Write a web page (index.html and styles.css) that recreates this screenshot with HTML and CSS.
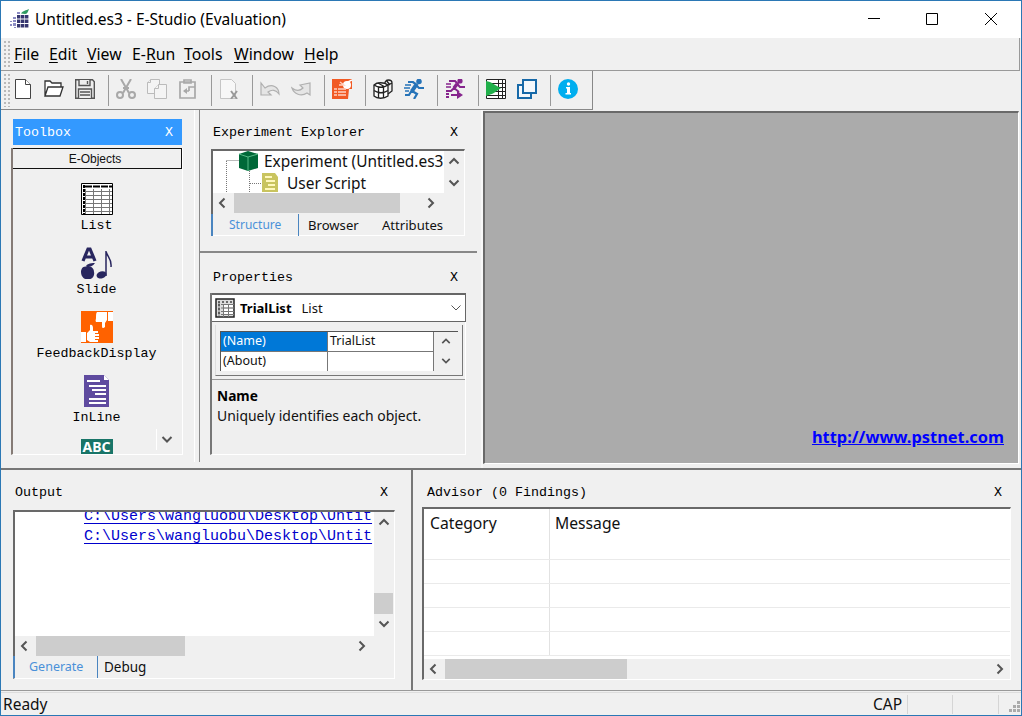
FILE: index.html
```html
<!DOCTYPE html>
<html lang="en">
<head>
<meta charset="utf-8">
<title>Untitled.es3 - E-Studio (Evaluation)</title>
<link rel="stylesheet" href="styles.css">
</head>
<body>
<svg class="defs" width="0" height="0">
  <symbol id="up" viewBox="0 0 12 12"><path d="M1.5 8.5 6 4l4.500 4.500"/></symbol>
  <symbol id="down" viewBox="0 0 12 12"><path d="M1.500 3.500 6 8l4.500-4.500"/></symbol>
  <symbol id="left" viewBox="0 0 12 12"><path d="M8.500 1.500 4 6l4.500 4.500"/></symbol>
  <symbol id="right" viewBox="0 0 12 12"><path d="M3.500 1.500 8 6l-4.500 4.500"/></symbol>
</svg>
<div class="window">
  <header class="titlebar">
    <svg class="app-icon" width="20" height="20" viewBox="0 0 20 20">
      <g fill="#36366f"><path d="M7 6h3.400v3.400H7zM11 6h3.400v3.400H11zM15 6h3.400v3.400H15zM7 10.500h3.400v3.400H7zM11 10.500h3.400v3.400H11zM15 10.500h3.400v3.400H15zM7 15h3.400v3.400H7zM11 15h3.400v3.400H11zM15 15h3.400v3.400H15z"/></g>
      <g fill="#8b8bc2"><path d="M3 8h3v2H3zM3 11h3v2H3zM3 14h3v3H3zM0 12h2v1H0zM0 15h2v2H0zM4 18h2v1H4zM7 3h3v2H7z"/></g>
      <path d="M11 4.500c2-3 5-3 8-4.500-1 3-2 5-4 5z" fill="#2f9a62"/>
    </svg>
    <span class="caption">Untitled.es3 - E-Studio (Evaluation)</span>
    <svg class="controls" width="136" height="20" viewBox="0 0 136 20" fill="none" stroke="#000" stroke-width="1">
      <path d="M1 9.500h12M59.500 4.500h11v11h-11zM118 4l12 12M130 4l-12 12"/>
    </svg>
  </header>
  <nav class="menubar">
    <i class="grip"></i>
    <span class="m-file"><u>F</u>ile</span><span class="m-edit"><u>E</u>dit</span><span class="m-view"><u>V</u>iew</span><span class="m-run">E-<u>R</u>un</span><span class="m-tools"><u>T</u>ools</span><span class="m-window"><u>W</u>indow</span><span class="m-help"><u>H</u>elp</span>
  </nav>
  <div class="toolrow">
    <div class="toolbar">
      <i class="grip"></i>
      <svg width="20" height="20" viewBox="0 0 20 20" fill="#fff" stroke="#444"><path d="M2.500.5h10l5 5v14h-15z"/><path d="M12.500.5v5h5"/></svg>
      <svg width="20" height="20" viewBox="0 0 20 20" fill="#fff" stroke="#333" stroke-width="1.300"><path d="M1 17V2h5l2 2h9v4M1 17 4 8h15l-3 9z"/></svg>
      <svg width="20" height="20" viewBox="0 0 20 20" fill="#eee" stroke="#555" stroke-width="1.400"><path d="M.7.7h16.800l1.800 2v16.600H.7z"/><path d="M4 1v5.500h11V1M12.500 2v3M3.500 19v-9h13v9M5 13h10M5 16h10"/></svg>
      <b></b>
      <svg width="20" height="20" viewBox="0 0 20 20" fill="none" stroke="#a8a8a8" stroke-width="2"><path d="M5 0l8 14M15 0 7 14M7 9h6"/><circle cx="4" cy="16" r="3"/><circle cx="16" cy="16" r="3"/></svg>
      <svg width="20" height="20" viewBox="0 0 20 20" fill="#f4f4f4" stroke="#bbb"><path d="M3.500.5h9v14h-12v-11z"/><path d="M.5 3.500h3v-3M11.500 5.500h8v14h-12v-10z"/><path d="M7.500 9.500h4v-4"/></svg>
      <svg width="20" height="20" viewBox="0 0 20 20" fill="none" stroke="#a8a8a8" stroke-width="1.700"><path d="M2 3h15v16H2z"/><path d="M6 4V1h7v3H6zM17 8h-6v4M11 12H6"/><path d="M9 9v6l-4-3z" fill="#a8a8a8" stroke="none"/></svg>
      <b></b>
      <svg width="20" height="20" viewBox="0 0 20 20" fill="#f7f7f7" stroke="#c5c5c5"><path d="M1.500.5h11l4 4v15h-15z"/><path d="m12 12 6 8M18 12l-6 8" stroke="#999" stroke-width="2"/></svg>
      <b></b>
      <svg width="20" height="20" viewBox="0 0 20 20" fill="#e5e5e5" stroke="#b0b0b0" stroke-width="1.200"><path d="M1 4v12h10l-3-3c4-3 8-2 11 2 0-7-7-11-14-6z"/></svg>
      <svg width="20" height="20" viewBox="0 0 20 20" fill="#e5e5e5" stroke="#b0b0b0" stroke-width="1.200"><path d="M19 4v12l-3-2C10 18 3 15 1 9c4 3 8 3 11 0L9 6z"/></svg>
      <b></b>
      <svg width="20" height="20" viewBox="0 0 20 20"><path d="M0 0h20v20H0z" fill="#f15a24"/><path d="M12 5l8-4" stroke="#fff" stroke-width="1.500"/><circle cx="15" cy="6" r="4" fill="#fff"/><path d="m8 3 4 3-5 0M2 10h3m1 0h8M2 13h3m1 0h8M2 16h3m1 0h8" fill="none" stroke="#ffd3c2" stroke-width="1.300"/><path d="M17 10h3v10h-4z" fill="#f0f0f0"/></svg>
      <b></b>
      <svg width="20" height="20" viewBox="0 0 20 20" fill="#fff" stroke="#222" stroke-width="1.300"><path d="M1 6c3-3 10-3 14 0v11c-4 3-11 3-14 0z"/><path d="M1 6c4 3 10 3 14 0M1 11.500c4 3 10 3 14 0M5.500 8v11M10.500 8v11M5 4l7 4"/><path d="M12 4c0-4 7-4 7 0v8l-4 3M15 6l4-2M13 1l4 5" fill="none"/></svg>
      <svg width="20" height="20" viewBox="0 0 20 20" fill="none" stroke="#2673b8" stroke-width="2.200"><circle cx="15" cy="2.500" r="1.700" fill="#2673b8"/><path d="M4 3h5l4 3-5 6 5 3-3 5M12 6l3 3h5M8 11l-3 5H1"/><path d="M12 6 8 12" stroke-width="4"/><path d="M1 6h6M0 9h6M1 12h4" stroke-width="1.300"/></svg>
      <b></b>
      <svg width="20" height="20" viewBox="0 0 20 20" fill="none" stroke="#86258d" stroke-width="2"><circle cx="15" cy="2" r="1.600" fill="#86258d"/><path d="M4 2h6l3 3-4 4 5 4M12 5l3 3h5M9 9l-3 3H1"/><path d="m12 5-3 4" stroke-width="3.500"/><path d="M1 5h5M1 8h5" stroke-width="1.300"/><path d="M6 15h6v-3l6 4-6 4v-3H6zM1 14h3v2H1zM1 17h3v2H1z" fill="#86258d" stroke="none"/></svg>
      <b></b>
      <svg width="20" height="20" viewBox="0 0 20 20"><path d="M.5.5h19v19H.5z" fill="#fff" stroke="#222"/><path d="M12.500 1v18M16.500 1v18M0 4.500h20M0 8.500h20M0 12.500h20M0 16.500h20" stroke="#222"/><path d="M0 2c6 1 8 4 15 7-7 5-8 6-15 8z" fill="#21b04b"/></svg>
      <svg width="20" height="20" viewBox="0 0 20 20" fill="#f4f8fc" stroke="#1769a8" stroke-width="2"><path d="M1 6h13v13H1z"/><path d="M6 1h13v13H6z"/></svg>
      <b></b>
      <svg width="20" height="20" viewBox="0 0 20 20"><circle cx="10" cy="10" r="10" fill="#00aeef"/><circle cx="10.500" cy="5" r="1.700" fill="#fff"/><path d="M8 8h4v6h1v1.500H7.500V14H9V9.500H8z" fill="#fff"/></svg>
    </div>
  </div>

  <main class="work">
    <section class="toolbox">
      <h2 class="head active"><span>Toolbox</span><span>X</span></h2>
      <div class="palette">
        <div class="group">E-Objects</div>
        <ul class="items">
          <li><svg width="32" height="32" viewBox="0 0 32 32"><path d="M.5.5h31v31H.5z" fill="#fff" stroke="#000"/><path d="M4 3.500h27" stroke="#000" stroke-width="2" stroke-dasharray="7 1"/><path d="M3 2v29" stroke="#000" stroke-width="2" stroke-dasharray="3 1"/><path d="M4.500 6v25M12.500 6v25M20.500 6v25M28.500 6v25M4 8.500h27M4 12.500h27M4 16.500h27M4 20.500h27M4 24.500h27M4 28.500h27" stroke="#777"/></svg><span>List</span></li>
          <li><svg width="32" height="32" viewBox="0 0 32 32"><g fill="none" stroke="#28265f"><path d="m2 14 5-12h2l5 12M4 10h8" stroke-width="3.200"/><path d="M25 29V4c1 6 6 7 5 16" stroke-width="1.500"/></g><g fill="#28265f"><ellipse cx="20.500" cy="28" rx="5" ry="3.500" transform="rotate(-15 20 28)"/><path d="M7 20c-5-2-7 2-7 5 0 5 4 8 7 7 4 1 7-3 6-7 0-4-3-6-6-5zM5 20c0-3 4-4 9-4-2 3-5 4-9 4z"/></g></svg><span>Slide</span></li>
          <li><svg width="32" height="32" viewBox="0 0 32 32"><path d="M0 0h32v32H0z" fill="#ff6200"/><g fill="#fff"><path d="M27 1h5v9h-5zM16 1h10v8l-2 3v4c-2 2-3 1-3-1v-4h-6c-1-2 0-2 0-4 0-3 0-5 1-6zM0 21h5v10H0zM6 22l3-3v-5c2-1 3 1 3 3v3h5v2h-3v1h4v2h-4v1h4v2h-4v1h3v2H9l-3-2z"/></g></svg><span>FeedbackDisplay</span></li>
          <li><svg width="32" height="32" viewBox="0 0 32 32"><path d="M3 0h20l5 5v27H3z" fill="#5f4b9f"/><path d="M23 0v5h5z" fill="#fff"/><path d="M6 6h13M8 11h17M11 15h14M14 19h11M8 24h17M8 28h17" stroke="#fff" stroke-width="2"/></svg><span>InLine</span></li>
          <li class="cut"><span class="abc">ABC</span></li>
        </ul>
        <svg class="arrow more"><use href="#down"/></svg>
      </div>
    </section>

    <div class="middle">
      <section class="explorer">
        <h2 class="head"><span>Experiment Explorer</span><span>X</span></h2>
        <div class="sunken">
          <div class="viewport">
            <div class="tree">
              <svg width="51" height="42" viewBox="1 0 51 42"><path d="M14.500 9.500h13M14.500 10v32M37.500 20v22M38 32.500h14" stroke="#777" stroke-dasharray="1 1" fill="none"/><path d="m27 3 9-3 10 3v14l-10 3-9-3z" fill="#006838"/><path d="m27 3 9 3 10-3M36 6v14" stroke="#55b985" fill="none"/></svg>
              <div class="names"><div class="t-root">Experiment (Untitled.es3</div><div class="child"><svg width="18" height="20" viewBox="0 0 18 20"><path d="M1 0h13l3 4v15H1z" fill="#c9c45f"/><path d="M4 4h7M5 8h9M7 12h7M4 16h10" stroke="#fff8bd" stroke-width="2"/></svg><span class="t-script">User Script</span></div></div>
            </div>
            <div class="vbar"><svg class="arrow"><use href="#up"/></svg><svg class="arrow"><use href="#down"/></svg></div>
          </div>
          <div class="hbar"><svg class="arrow"><use href="#left"/></svg><i></i><svg class="arrow"><use href="#right"/></svg></div>
          <div class="tabs"><span class="on">Structure</span><span class="t-browser">Browser</span><span class="t-attr">Attributes</span></div>
        </div>
      </section>
      <section class="properties">
        <h2 class="head"><span>Properties</span><span>X</span></h2>
        <div class="propbox">
          <div class="combo">
            <svg width="20" height="20" viewBox="0 0 20 20"><path d="M1 1h18v18H1z" fill="#ddd" stroke="#222" stroke-width="1.500"/><path d="M4 4v14M8.500 6v13M13.500 6v13M6 6.500h13M6 10h13M6 13.500h13M6 16.500h13" stroke="#777"/><path d="M3 4h14M4 6v12" stroke="#444" stroke-width="1.500" stroke-dasharray="2 2"/><path d="M9 7h4v2H9zM14 7h4v2h-4zM9 11h4v2H9zM14 11h4v2h-4zM9 14h4v2H9zM14 14h4v2h-4z" fill="#fff"/></svg>
            <strong>TrialList</strong><span>List</span><svg class="arrow thin"><use href="#down"/></svg>
          </div>
          <div class="gridframe"><div class="gridbody">
            <div class="cells"><span class="sel">(Name)</span><span>TrialList</span><span>(About)</span><span></span></div>
            <div class="vbar"><svg class="arrow"><use href="#up"/></svg><svg class="arrow"><use href="#down"/></svg></div>
          </div></div>
          <div class="help"><strong>Name</strong><p>Uniquely identifies each object.</p></div>
        </div>
      </section>
    </div>
    <div class="mdi"><a>http://www.pstnet.com</a></div>
  </main>

  <div class="docks">
    <section class="output">
      <h2 class="head"><span>Output</span><span>X</span></h2>
      <div class="sunken">
        <div class="viewport">
          <div class="log"><a>C:\Users\wangluobu\Desktop\Untit</a><a>C:\Users\wangluobu\Desktop\Untit</a></div>
          <div class="vbar"><svg class="arrow"><use href="#up"/></svg><i></i><svg class="arrow"><use href="#down"/></svg></div>
        </div>
        <div class="hbar"><svg class="arrow"><use href="#left"/></svg><i></i><svg class="arrow"><use href="#right"/></svg></div>
        <div class="tabs"><span class="on">Generate</span><span class="t-debug">Debug</span></div>
      </div>
    </section>
    <section class="advisor">
      <h2 class="head"><span>Advisor (0 Findings)</span><span>X</span></h2>
      <div class="sunken">
        <div class="table">
          <div class="tr first"><span><em class="t-cat">Category</em></span><span><em class="t-msg">Message</em></span></div>
          <div class="tr"><span></span><span></span></div><div class="tr"><span></span><span></span></div><div class="tr"><span></span><span></span></div><div class="tr"><span></span><span></span></div>
        </div>
        <div class="hbar"><svg class="arrow"><use href="#left"/></svg><i></i><svg class="arrow"><use href="#right"/></svg></div>
      </div>
    </section>
  </div>

  <footer class="status"><span class="ready">Ready</span><span class="cap">CAP</span><span class="slot"></span><span class="slot"></span>
    <svg width="22" height="20" viewBox="0 0 22 20" fill="#aaa"><path d="M18 7h3v3h-3zM14 11h3v3h-3zM18 11h3v3h-3zM10 15h3v3h-3zM14 15h3v3h-3zM18 15h3v3h-3z"/></svg>
  </footer>
</div>
</body>
</html>
```
FILE: styles.css
```css
* { box-sizing: border-box; }
body { margin: 0; font-family: "Noto Sans", sans-serif; color: #111; overflow: hidden; }
h2, p, ul { margin: 0; padding: 0; font-weight: normal; }
ul { list-style: none; }
svg { display: block; flex: none; }
em { font-style: normal; }
span, a, strong { white-space: nowrap; }
.defs { position: absolute; }
.window { width: 1022px; height: 716px; border: 1px solid #2b78b5; background: #f0f0f0; display: flex; flex-direction: column; }

.titlebar { height: 37px; background: #fff; display: flex; align-items: center; padding: 0 0 2px 9px; }
.caption { margin-left: 5px; font-size: 15.550px; color: #000; }
.controls { margin-left: auto; margin-right: 18px; }

.grip { width: 7px; align-self: stretch; margin: 2px 0; background: radial-gradient(circle, #b9b9b9 0 0.800px, transparent 1px) 0 0 / 4px 4px; }
.menubar { height: 33px; width: 1019px; border-bottom: 1px solid #999; border-right: 1px solid #999; display: flex; align-items: center; font-size: 15.800px; padding-left: 2px; color: #000; }
.menubar span { flex: none; }
.menubar u { text-underline-offset: 2px; text-decoration-thickness: 1px; }
.m-file { width: 35px; margin-left: 4px; }
.m-edit { width: 38px; }
.m-view { width: 45px; }
.m-run { width: 52px; }
.m-tools { width: 50px; }
.m-window { width: 70px; }

.toolrow { height: 39px; display: flex; }
.toolbar { width: 592px; border-right: 1px solid #888; border-bottom: 1px solid #888; display: flex; align-items: center; padding-left: 2px; }
.toolbar svg { margin: 0 0 3px 11px; }
.toolbar .grip + svg { margin-left: 3px; }
.toolbar b { width: 1px; height: 31px; background: #999; margin-left: 13px; margin-right: -4px; }

.head { display: flex; justify-content: space-between; align-items: center; height: 26px; font: 13.330px/26px "Liberation Mono", monospace; color: #000; flex: none; padding-top: 2px; }
.arrow { width: 12px; height: 12px; fill: none; stroke: #555; stroke-width: 2; }
.thin { stroke-width: 1; }
.vbar { display: flex; flex-direction: column; align-items: center; justify-content: space-between; background: #f0f0f0; }
.hbar { display: flex; align-items: center; background: #f0f0f0; height: 20px; }
.hbar i, .vbar i { background: #cdcdcd; }
.hbar i { height: 100%; }
.sunken { border: solid; border-width: 2px 1px 1px 2px; border-color: #696969 #fff #fff #696969; display: flex; flex-direction: column; }
.viewport { display: flex; overflow: hidden; }
.tabs { display: flex; height: 22px; align-items: center; font-size: 13.500px; color: #111; margin-left: -2px; }
.tabs .on { color: #4a90d9; font-size: 12.500px; border-left: 2px solid #4a85c0; border-right: 1px solid #4a85c0; height: 22px; line-height: 22px; padding-left: 14px; }

.work { height: 358px; display: flex; }
.toolbox { width: 199px; border-right: 1px solid #888; box-shadow: inset -4px 0 #f0f0f0, inset -5px 0 #fff; padding: 9px 17px 0 10px; height: 352px; }
.middle .head, .docks .head { padding-top: 2px; }
.toolbox .active { background: #39f; color: #fff; padding: 2px 9px 0 2px; margin-left: 2px; width: 169px; }
.palette { position: relative; margin-top: 3px; height: 307px; width: 172px; border-left: 2px solid #857b76; border-bottom: 1px solid #fff; border-right: 1px solid #fff; overflow: hidden; }
.group { height: 21px; border: 1px solid #111; border-left: 0; font: 12px/20px "Liberation Sans", sans-serif; text-align: center; padding-right: 4px; }
.items { padding: 14px 2px 0 0; }
.items li { height: 64px; display: flex; flex-direction: column; align-items: center; font: 13.330px/21px "Liberation Mono", monospace; color: #000; }
.items .cut { height: 15px; }
.abc { width: 32px; height: 15px; background: #197568; color: #fff; font: bold 14px/16px "Noto Sans", sans-serif; text-align: center; }
.more { position: absolute; right: 5px; bottom: 4px; width: 21px; height: 21px; padding: 4px; border-left: 1px solid #fff; }

.middle { width: 283px; display: flex; flex-direction: column; border-right: 2px solid #f8f8f8; }
.explorer { width: 277px; height: 143px; padding-top: 9px; border-bottom: 2px solid #888; }
.explorer .head { padding-right: 19px; padding-left: 13px; }
.explorer .sunken { margin: 4px 0 0 11px; width: 254px; height: 87px; }
.explorer .viewport { height: 42px; }
.explorer .tree { width: 231px; height: 42px; background: #fff; display: flex; }
.names { font-size: 15.450px; line-height: 22px; margin-top: -1px; }
.child { display: flex; align-items: center; margin-left: -3px; height: 22px; }
.child span { margin-left: 8px; }
.explorer .vbar { width: 19px; padding: 4px 0; }
.explorer .hbar i { width: 166px; margin: 0 25px 0 6px; }
.explorer .hbar .arrow, .output .hbar .arrow:first-child, .advisor .hbar .arrow:first-child { margin-left: 3px; }
.explorer .hbar .arrow:last-child { margin-left: 0; }
.explorer .tabs { font-size: 13.100px; padding-top: 1px; }
.explorer .on { width: 88px; font-size: 12px; padding-left: 16px; }
.t-browser { margin-left: 9px; width: 74px; }

.properties { padding-top: 11px; }
.properties .head { padding-left: 13px; padding-right: 23px; }
.propbox { margin: 3px 0 0 10px; width: 256px; height: 162px; border-left: 2px solid #777; border-right: 1px solid #fff; border-bottom: 1px solid #fff; display: flex; flex-direction: column; }
.combo { height: 29px; border: 1px solid #666; border-top-width: 2px; border-left: 0; width: 254px; background: #fff; display: flex; align-items: center; padding: 0 3px 1px; font-size: 13px; }
.combo strong { margin-left: 5px; color: #000; }
.combo span { margin-left: 10px; }
.thin { margin-left: auto; }
.gridframe { width: 248px; height: 51px; margin: 3px 0 0 3px; border: solid #777; border-width: 0 1px 1px; border-left-color: #ddd; padding: 6px 4px 3px; }
.gridbody { display: flex; border-top: 1px solid #555; border-left: 1px solid #555; height: 40px; }
.cells { display: grid; grid-template-columns: 107px 106px; grid-template-rows: 20px 19px; width: 213px; background: #fff; font-size: 12.500px; line-height: 18px; }
.cells span { border-right: 1px solid #777; border-bottom: 1px solid #777; padding-left: 2px; }
.cells span:nth-child(n+3) { border-bottom: 0; }
.cells .sel { background: #0078d7; color: #fff; }
.gridbody .vbar { width: 23px; padding: 4px 0 5px; }
.gridbody .arrow { width: 10px; height: 10px; }
.help { margin-top: 3px; border-top: 1px solid #999; flex: 1; padding: 6px 5px; font-size: 13.950px; line-height: 20px; background: #efefef; }
.help strong { display: block; color: #000; font-size: 13.700px; }

.mdi { width: 536px; height: 353px; margin-top: 1px; background: #ababab; border-top: 2px solid #696969; border-left: 2px solid #696969; border-bottom: 1px solid #fff; border-right: 1px solid #fff; display: flex; justify-content: flex-end; align-items: flex-end; padding: 0 14px 15px; }
.mdi a { color: #00f; font-weight: bold; font-size: 16.400px; text-decoration: underline; }

.docks { height: 223px; display: flex; border-top: 2px solid #777; border-bottom: 1px solid #999; }
.output { width: 412px; border-right: 2px solid #777; padding-top: 9px; }
.output .head { padding-left: 14px; padding-right: 23px; }
.output .sunken { margin: 5px 0 0 12px; width: 382px; height: 169px; }
.output .viewport { height: 125px; }
.log { width: 359px; background: #fff; display: flex; flex-direction: column; padding-left: 69px; overflow: hidden; margin-top: -5px; }
.log a { font: 15px/20px "Liberation Mono", monospace; color: #00c; text-decoration: underline; text-underline-offset: 3px; }
.output .vbar { width: 19px; padding: 4px 0 6px; }
.output .vbar i { width: 19px; height: 21px; margin-top: 61px; }
.output .hbar i { width: 149px; margin: 0 171px 0 6px; }
.output .on { width: 85px; }
.t-debug { margin-left: 6px; }

.advisor { flex: 1; padding-top: 9px; }
.advisor .head { padding-left: 14px; padding-right: 19px; }
.advisor .sunken { margin: 2px 0 0 9px; width: 589px; height: 173px; }
.table { height: 150px; background: #fff; overflow: hidden; }
.tr { display: flex; height: 24px; border-bottom: 1px solid #eaeaea; }
.tr.first { height: 51px; }
.tr span { padding: 2px 6px; font-size: 15.700px; line-height: 24px; }
.tr span:first-child { width: 126px; border-right: 1px solid #e2e2e2; }
.tr span:last-child { padding-left: 5px; }
.advisor .hbar i { width: 182px; margin: 0 367px 0 6px; }

.status { flex: 1; margin-top: 1px; border-top: 1px solid #ddd; display: flex; align-items: center; font-size: 15.500px; padding-left: 2px; background: #f0f0f0; }
.cap { margin-left: auto; width: 34px; }
.slot { width: 46px; height: 19px; border: solid #d5d5d5; border-width: 0 1px; }
.slot + .slot { border-left: 0; }
```
